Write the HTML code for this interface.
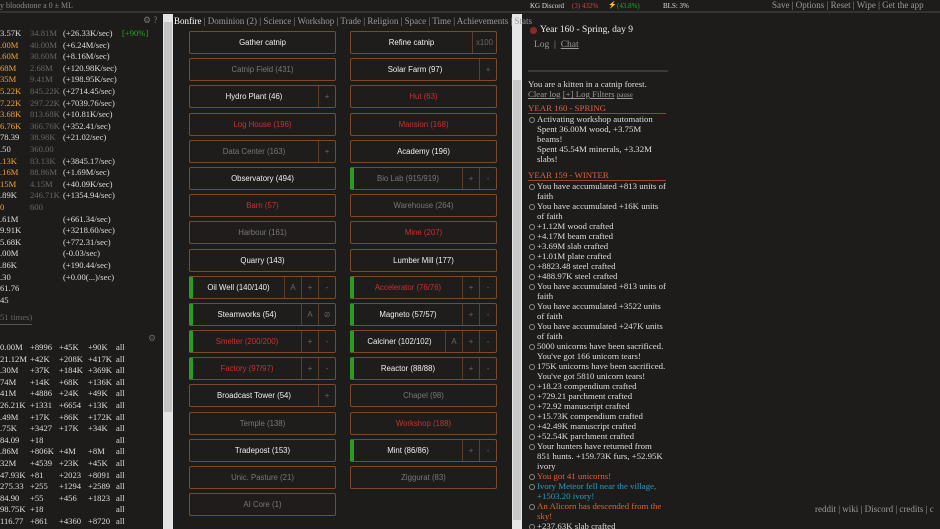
<!DOCTYPE html>
<html><head><meta charset="utf-8"><style>
*{margin:0;padding:0;box-sizing:border-box}
html,body{width:940px;height:529px;overflow:hidden}
body{background:#1e1c1b;color:#ddd;font-family:"Liberation Serif",serif;font-size:9px;position:relative}
.a{position:absolute;white-space:nowrap}
.top{left:0;top:0;width:940px;height:13px;border-bottom:2px solid #333;font-size:8px;color:#aaa}
#left{left:0;top:15px;width:163px;height:514px;overflow:hidden}
.sb{position:absolute;background:#ddd;width:10px}
.r{position:absolute;height:11.6px;line-height:11.6px;font-size:8.6px;white-space:nowrap}
.r span{position:absolute}
.o{color:#f0a030}.g{color:#666}.gr{color:#2a2}
.b{position:absolute;height:23px;width:147px;border:1px solid #7a4a2c;background:#1f1d1c;display:flex;font-family:"Liberation Sans",sans-serif;font-size:7.8px;color:#eee;border-radius:2px}
.b .l{flex:1;text-align:center;line-height:21px}
.b .s{width:17px;border-left:1px solid #5a3f2c;text-align:center;line-height:21px;color:#666}
.b.on{border-left:4px solid #2a9a2a}
.d .l{color:#777}.rd .l{color:#c83030}
.L{left:189px}.R{left:350px}
#log{left:528px;top:79px;width:139px;height:450px;overflow:hidden;font-size:8.8px;line-height:10px;color:#ddd;white-space:normal}
#log .h{color:#e06040;border-bottom:1px solid #a04030;margin-top:3px;width:138px}
#log li{list-style:none;padding-left:9px;position:relative}
#log li:before{content:"";position:absolute;left:1px;top:3px;width:4px;height:4px;border:1px solid #888;border-radius:50%}
</style></head><body>
<div class="a top"><span class="a" style="left:0;top:1px;color:#888">y bloodstone a 0 ± ML</span>
<span class="a" style="left:530px;top:2px;color:#ddd;font-size:7px">KG Discord</span>
<span class="a" style="left:572px;top:2px;color:#c44;font-size:7px">(3) 432%</span>
<span class="a" style="left:608px;top:1px;color:#dc3;font-size:7px">⚡</span>
<span class="a" style="left:617px;top:2px;color:#2a2;font-size:7px">(43.8%)</span>
<span class="a" style="left:663px;top:2px;color:#ddd;font-size:7px">BLS: 3%</span>
<span class="a" style="left:772px;top:0;color:#999;font-size:9px">Save | Options | Reset | Wipe | Get the app</span></div>

<div class="a" id="left">
<span class="a" style="left:143px;top:0;color:#777">⚙ ?</span>
<div class="r" style="top:13px"><span>3.57K</span><span class="g" style="left:30px">34.81M</span><span style="left:63px">(+26.33K/sec)</span><span class="gr" style="left:122px">[+90%]</span></div>
<div class="r" style="top:24.6px"><span class="o">.00M</span><span class="g" style="left:30px">40.00M</span><span style="left:63px">(+6.24M/sec)</span></div>
<div class="r" style="top:36.2px"><span class="o">.60M</span><span class="g" style="left:30px">30.60M</span><span style="left:63px">(+8.16M/sec)</span></div>
<div class="r" style="top:47.8px"><span class="o">68M</span><span class="g" style="left:30px">2.68M</span><span style="left:63px">(+120.98K/sec)</span></div>
<div class="r" style="top:59.4px"><span class="o">35M</span><span class="g" style="left:30px">9.41M</span><span style="left:63px">(+198.95K/sec)</span></div>
<div class="r" style="top:71px"><span class="o">5.22K</span><span class="g" style="left:30px">845.22K</span><span style="left:63px">(+2714.45/sec)</span></div>
<div class="r" style="top:82.6px"><span class="o">7.22K</span><span class="g" style="left:30px">297.22K</span><span style="left:63px">(+7039.76/sec)</span></div>
<div class="r" style="top:94.2px"><span class="o">3.68K</span><span class="g" style="left:30px">813.68K</span><span style="left:63px">(+10.81K/sec)</span></div>
<div class="r" style="top:105.8px"><span class="o">6.76K</span><span class="g" style="left:30px">366.76K</span><span style="left:63px">(+352.41/sec)</span></div>
<div class="r" style="top:117.4px"><span>78.39</span><span class="g" style="left:30px">38.98K</span><span style="left:63px">(+21.02/sec)</span></div>
<div class="r" style="top:129px"><span>.50</span><span class="g" style="left:30px">360.00</span></div>
<div class="r" style="top:140.6px"><span class="o">.13K</span><span class="g" style="left:30px">83.13K</span><span style="left:63px">(+3845.17/sec)</span></div>
<div class="r" style="top:152.2px"><span class="o">.16M</span><span class="g" style="left:30px">88.86M</span><span style="left:63px">(+1.69M/sec)</span></div>
<div class="r" style="top:163.8px"><span class="o">15M</span><span class="g" style="left:30px">4.15M</span><span style="left:63px">(+40.09K/sec)</span></div>
<div class="r" style="top:175.4px"><span>.89K</span><span class="g" style="left:30px">246.71K</span><span style="left:63px">(+1354.94/sec)</span></div>
<div class="r" style="top:187px"><span class="o">0</span><span class="g" style="left:30px">600</span></div>
<div class="r" style="top:198.6px"><span>.61M</span><span style="left:63px">(+661.34/sec)</span></div>
<div class="r" style="top:210.2px"><span>9.91K</span><span style="left:63px">(+3218.60/sec)</span></div>
<div class="r" style="top:221.8px"><span>5.68K</span><span style="left:63px">(+772.31/sec)</span></div>
<div class="r" style="top:233.4px"><span>.00M</span><span style="left:63px">(-0.03/sec)</span></div>
<div class="r" style="top:245px"><span>.86K</span><span style="left:63px">(+190.44/sec)</span></div>
<div class="r" style="top:256.6px"><span>.30</span><span style="left:63px">(+0.00(...)/sec)</span></div>
<div class="r" style="top:268.2px"><span>61.76</span></div>
<div class="r" style="top:279.8px"><span>45</span></div>
<div class="r" style="top:297px"><span class="g">51 times)</span></div>
<div class="a" style="left:0;top:309px;width:32px;border-top:1px solid #555"></div>
<span class="a" style="left:148px;top:318px;color:#666">⚙</span>
<div class="r" style="top:327px"><span>0.00M</span><span style="left:30px">+8996</span><span style="left:59px">+45K</span><span style="left:88px">+90K</span><span style="left:116px">all</span></div>
<div class="r" style="top:338.6px"><span>21.12M</span><span style="left:30px">+42K</span><span style="left:59px">+208K</span><span style="left:88px">+417K</span><span style="left:116px">all</span></div>
<div class="r" style="top:350.2px"><span>.30M</span><span style="left:30px">+37K</span><span style="left:59px">+184K</span><span style="left:88px">+369K</span><span style="left:116px">all</span></div>
<div class="r" style="top:361.8px"><span>74M</span><span style="left:30px">+14K</span><span style="left:59px">+68K</span><span style="left:88px">+136K</span><span style="left:116px">all</span></div>
<div class="r" style="top:373.4px"><span>41M</span><span style="left:30px">+4886</span><span style="left:59px">+24K</span><span style="left:88px">+49K</span><span style="left:116px">all</span></div>
<div class="r" style="top:385px"><span>26.21K</span><span style="left:30px">+1331</span><span style="left:59px">+6654</span><span style="left:88px">+13K</span><span style="left:116px">all</span></div>
<div class="r" style="top:396.6px"><span>.49M</span><span style="left:30px">+17K</span><span style="left:59px">+86K</span><span style="left:88px">+172K</span><span style="left:116px">all</span></div>
<div class="r" style="top:408.2px"><span>.75K</span><span style="left:30px">+3427</span><span style="left:59px">+17K</span><span style="left:88px">+34K</span><span style="left:116px">all</span></div>
<div class="r" style="top:419.8px"><span>84.09</span><span style="left:30px">+18</span><span style="left:116px">all</span></div>
<div class="r" style="top:431.4px"><span>.86M</span><span style="left:30px">+806K</span><span style="left:59px">+4M</span><span style="left:88px">+8M</span><span style="left:116px">all</span></div>
<div class="r" style="top:443px"><span>32M</span><span style="left:30px">+4539</span><span style="left:59px">+23K</span><span style="left:88px">+45K</span><span style="left:116px">all</span></div>
<div class="r" style="top:454.6px"><span>47.93K</span><span style="left:30px">+81</span><span style="left:59px">+2023</span><span style="left:88px">+8091</span><span style="left:116px">all</span></div>
<div class="r" style="top:466.2px"><span>275.33</span><span style="left:30px">+255</span><span style="left:59px">+1294</span><span style="left:88px">+2589</span><span style="left:116px">all</span></div>
<div class="r" style="top:477.8px"><span>84.90</span><span style="left:30px">+55</span><span style="left:59px">+456</span><span style="left:88px">+1823</span><span style="left:116px">all</span></div>
<div class="r" style="top:489.4px"><span>98.75K</span><span style="left:30px">+18</span><span style="left:116px">all</span></div>
<div class="r" style="top:501px"><span>116.77</span><span style="left:30px">+861</span><span style="left:59px">+4360</span><span style="left:88px">+8720</span><span style="left:116px">all</span></div>
</div>

<div class="sb" style="left:163px;top:14px;height:515px;width:10px;background:#e4e4e4"></div>
<div class="sb" style="left:164px;top:22px;height:390px;width:8px;background:#c4c4c4"></div>
<div class="sb" style="left:512px;top:14px;height:515px;width:10px;background:#e6e6e6"></div>
<div class="sb" style="left:513px;top:80px;height:440px;width:8px;background:#c8c8c8"></div>

<div class="a" style="left:174px;top:16px;font-size:9px;color:#999"><b style="color:#fff;font-weight:normal">Bonfire</b> | Dominion (2) | Science | Workshop | Trade | Religion | Space | Time | Achievements | Stats</div>

<div class="b L" style="top:31px"><span class="l">Gather catnip</span></div>
<div class="b R" style="top:31px"><span class="l">Refine catnip</span><span class="s" style="width:24px">x100</span></div>
<div class="b L d" style="top:58px"><span class="l">Catnip Field (431)</span></div>
<div class="b R" style="top:58px"><span class="l">Solar Farm (97)</span><span class="s">+</span></div>
<div class="b L" style="top:85px"><span class="l">Hydro Plant (46)</span><span class="s">+</span></div>
<div class="b R rd" style="top:85px"><span class="l">Hut (63)</span></div>
<div class="b L rd" style="top:113px"><span class="l">Log House (196)</span></div>
<div class="b R rd" style="top:113px"><span class="l">Mansion (168)</span></div>
<div class="b L d" style="top:140px"><span class="l">Data Center (163)</span><span class="s">+</span></div>
<div class="b R" style="top:140px"><span class="l">Academy (196)</span></div>
<div class="b L" style="top:167px"><span class="l">Observatory (494)</span></div>
<div class="b R d on" style="top:167px"><span class="l">Bio Lab (915/919)</span><span class="s">+</span><span class="s">-</span></div>
<div class="b L rd" style="top:194px"><span class="l">Barn (57)</span></div>
<div class="b R d" style="top:194px"><span class="l">Warehouse (264)</span></div>
<div class="b L d" style="top:221px"><span class="l">Harbour (161)</span></div>
<div class="b R rd" style="top:221px"><span class="l">Mine (207)</span></div>
<div class="b L" style="top:249px"><span class="l">Quarry (143)</span></div>
<div class="b R" style="top:249px"><span class="l">Lumber Mill (177)</span></div>
<div class="b L on" style="top:276px"><span class="l">Oil Well (140/140)</span><span class="s">A</span><span class="s">+</span><span class="s">-</span></div>
<div class="b R rd on" style="top:276px"><span class="l">Accelerator (76/76)</span><span class="s">+</span><span class="s">-</span></div>
<div class="b L on" style="top:303px"><span class="l">Steamworks (54)</span><span class="s">A</span><span class="s">⊘</span></div>
<div class="b R on" style="top:303px"><span class="l">Magneto (57/57)</span><span class="s">+</span><span class="s">-</span></div>
<div class="b L rd on" style="top:330px"><span class="l">Smelter (200/200)</span><span class="s">+</span><span class="s">-</span></div>
<div class="b R on" style="top:330px"><span class="l">Calciner (102/102)</span><span class="s">A</span><span class="s">+</span><span class="s">-</span></div>
<div class="b L rd on" style="top:357px"><span class="l">Factory (97/97)</span><span class="s">+</span><span class="s">-</span></div>
<div class="b R on" style="top:357px"><span class="l">Reactor (88/88)</span><span class="s">+</span><span class="s">-</span></div>
<div class="b L" style="top:384px"><span class="l">Broadcast Tower (54)</span><span class="s">+</span></div>
<div class="b R d" style="top:384px"><span class="l">Chapel (98)</span></div>
<div class="b L d" style="top:412px"><span class="l">Temple (138)</span></div>
<div class="b R rd" style="top:412px"><span class="l">Workshop (188)</span></div>
<div class="b L" style="top:439px"><span class="l">Tradepost (153)</span></div>
<div class="b R on" style="top:439px"><span class="l">Mint (86/86)</span><span class="s">+</span><span class="s">-</span></div>
<div class="b L d" style="top:466px"><span class="l">Unic. Pasture (21)</span></div>
<div class="b R d" style="top:466px"><span class="l">Ziggurat (83)</span></div>
<div class="b L d" style="top:493px"><span class="l">AI Core (1)</span></div>

<span class="a" style="left:530px;top:27px;width:7px;height:7px;border-radius:50%;background:#8a2a2a"></span>
<span class="a" style="left:540px;top:25px;font-size:9.5px;color:#eee">Year 160 - Spring, day 9</span>
<span class="a" style="left:534px;top:40px;font-size:9.5px;color:#999">Log &nbsp;| &nbsp;<u>Chat</u></span>
<div class="a" style="left:528px;top:70px;width:140px;border-top:2px solid #3a3a3a"></div>
<div class="a" id="log">
<div>You are a kitten in a catnip forest.</div>
<div style="color:#999"><u>Clear log</u> <u>[+] Log Filters</u> <u style="font-size:7px">pause</u></div>
<div class="h">YEAR 160 - SPRING</div>
<ul><li>Activating workshop automation<br>Spent 36.00M wood, +3.75M beams!<br>Spent 45.54M minerals, +3.32M slabs!</li></ul>
<div class="h" style="margin-top:6px">YEAR 159 - WINTER</div>
<ul>
<li>You have accumulated +813 units of faith</li>
<li>You have accumulated +16K units of faith</li>
<li>+1.12M wood crafted</li>
<li>+4.17M beam crafted</li>
<li>+3.69M slab crafted</li>
<li>+1.01M plate crafted</li>
<li>+8823.48 steel crafted</li>
<li>+488.97K steel crafted</li>
<li>You have accumulated +813 units of faith</li>
<li>You have accumulated +3522 units of faith</li>
<li>You have accumulated +247K units of faith</li>
<li>5000 unicorns have been sacrificed. You've got 166 unicorn tears!</li>
<li>175K unicorns have been sacrificed. You've got 5810 unicorn tears!</li>
<li>+18.23 compendium crafted</li>
<li>+729.21 parchment crafted</li>
<li>+72.92 manuscript crafted</li>
<li>+15.73K compendium crafted</li>
<li>+42.49K manuscript crafted</li>
<li>+52.54K parchment crafted</li>
<li>Your hunters have returned from 851 hunts. +159.73K furs, +52.95K ivory</li>
<li style="color:#e06030">You got 41 unicorns!</li>
<li style="color:#2a9ac0">Ivory Meteor fell near the village, +1503.20 ivory!</li>
<li style="color:#e06030">An Alicorn has descended from the sky!</li>
<li>+237.63K slab crafted</li>
</ul></div>
<span class="a" style="left:815px;top:504px;font-size:9px;color:#999">reddit | wiki | Discord | credits | c</span>
</body></html>
